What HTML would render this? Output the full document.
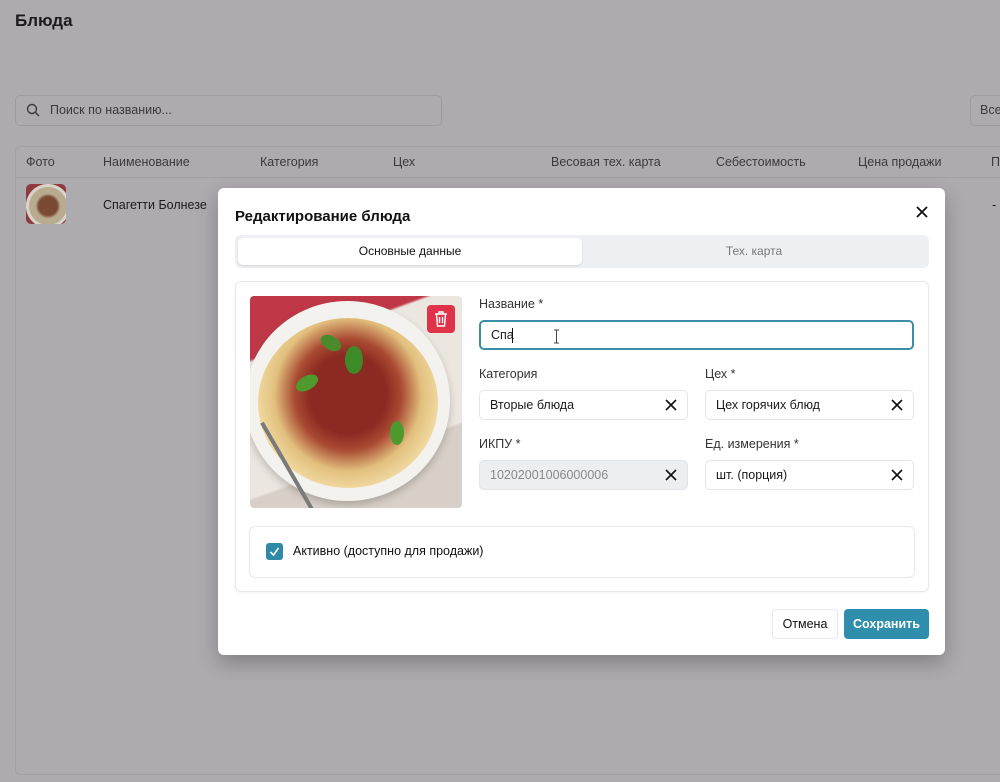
<!DOCTYPE html>
<html><head><meta charset="utf-8">
<style>
*{box-sizing:border-box;margin:0;padding:0}
body{width:1000px;height:782px;overflow:hidden;background:#adabae;font-family:"Liberation Sans",sans-serif;color:#111;position:relative;font-size:12.5px}
.a{position:absolute}
.dim{color:#3a3a3c}
.modal{left:218px;top:188px;width:727px;height:467px;background:#fff;border-radius:6px;box-shadow:0 8px 20px rgba(0,0,0,.25)}
.inp{position:absolute;height:30px;border:1px solid #e2e4e8;border-radius:5px;background:#fff;font-size:12.5px;line-height:28px;padding-left:10px;color:#1a1a1a}
.x{position:absolute;right:9px;top:7px;width:14px;height:14px}
.lbl{position:absolute;font-size:12.5px;color:#333}
</style></head><body>
<div class="a" style="left:15px;top:11px;font-size:17px;font-weight:bold;color:#1b1b1d">Блюда</div>
<div class="a" style="left:15px;top:95px;width:427px;height:31px;border:1px solid #9d9b9f;border-radius:5px"></div>
<svg class="a" style="left:26px;top:103px" width="14" height="14" viewBox="0 0 14 14"><circle cx="6" cy="6" r="4.5" fill="none" stroke="#3a3a3c" stroke-width="1.4"/><path d="M9.5 9.5L13 13" stroke="#3a3a3c" stroke-width="1.4"/></svg>
<div class="a dim" style="left:50px;top:103px">Поиск по названию...</div>
<div class="a" style="left:970px;top:95px;width:40px;height:31px;border:1px solid #9d9b9f;border-radius:5px"></div>
<div class="a dim" style="left:980px;top:103px">Все</div>
<div class="a" style="left:15px;top:146px;width:1000px;height:629px;border:1px solid #a2a0a4;border-radius:5px"></div>
<div class="a" style="left:16px;top:177px;width:984px;height:1px;background:#a2a0a4"></div>
<div class="a dim" style="left:26px;top:155px">Фото</div>
<div class="a dim" style="left:103px;top:155px">Наименование</div>
<div class="a dim" style="left:260px;top:155px">Категория</div>
<div class="a dim" style="left:393px;top:155px">Цех</div>
<div class="a dim" style="left:551px;top:155px">Весовая тех. карта</div>
<div class="a dim" style="left:716px;top:155px">Себестоимость</div>
<div class="a dim" style="left:858px;top:155px">Цена продажи</div>
<div class="a dim" style="left:991px;top:155px">П</div>
<div class="a" style="left:26px;top:184px;width:40px;height:40px;border-radius:5px;background:radial-gradient(circle at 55% 55%,#7a4a34 0 30%,#b8ab90 40% 60%,#d8d4cc 62% 70%,#8e3a40 72%)"></div>
<div class="a" style="left:103px;top:198px;color:#1b1b1d">Спагетти Болнезе</div>
<div class="a" style="left:992px;top:198px">-</div>

<div class="a modal">
<div class="a" style="left:17px;top:20px;font-size:15px;font-weight:bold;color:#111">Редактирование блюда</div>
<svg class="a" style="left:698px;top:18px" width="12" height="12" viewBox="0 0 12 12"><path d="M1 1L11 11M11 1L1 11" stroke="#111" stroke-width="1.8"/></svg>
<div class="a" style="left:17px;top:47px;width:694px;height:33px;background:#eef0f3;border-radius:6px"></div>
<div class="a" style="left:20px;top:50px;width:344px;height:27px;background:#fff;border-radius:5px;box-shadow:0 1px 2px rgba(0,0,0,.12);text-align:center;line-height:27px;font-size:12px;color:#111">Основные данные</div>
<div class="a" style="left:364px;top:50px;width:344px;height:27px;text-align:center;line-height:27px;font-size:12px;color:#777">Тех. карта</div>
<div class="a" style="left:17px;top:93px;width:694px;height:311px;border:1px solid #e6e8eb;border-radius:6px;box-shadow:0 1px 2px rgba(0,0,0,.05)"></div>
<div class="a" style="left:32px;top:108px;width:212px;height:212px;border-radius:4px;overflow:hidden;background:linear-gradient(160deg,#c03848 0 22%,#ece6e0 23% 70%,#d8d0c8 71%)">
  <div class="a" style="left:-5px;top:5px;width:205px;height:200px;border-radius:50%;background:#f4f2ee;box-shadow:0 4px 8px rgba(0,0,0,.2)"></div>
  <div class="a" style="left:8px;top:22px;width:180px;height:170px;border-radius:50%;background:radial-gradient(ellipse at 50% 45%,#8a2a22 0 30%,#a94a32 42%,#e2c07e 58%,#f0d9a0 72%)"></div>
  <div class="a" style="left:70px;top:40px;width:22px;height:14px;border-radius:50%;background:#4a8a2a;transform:rotate(30deg)"></div>
  <div class="a" style="left:45px;top:80px;width:24px;height:14px;border-radius:50%;background:#4e9a2e;transform:rotate(-30deg)"></div>
  <div class="a" style="left:140px;top:125px;width:14px;height:24px;border-radius:50%;background:#4e9a2e"></div>
  <div class="a" style="left:95px;top:50px;width:18px;height:28px;border-radius:50%;background:#3f8a28"></div>
  <div class="a" style="left:35px;top:120px;width:4px;height:100px;background:#7a7a7a;transform:rotate(-30deg)"></div>
  <div class="a" style="left:177px;top:9px;width:28px;height:28px;border-radius:4px;background:#e0334a"></div>
  <svg class="a" style="left:184px;top:15px" width="14" height="16" viewBox="0 0 14 16"><path d="M1 3H13M5 3V1H9V3M2.5 3L3.5 15H10.5L11.5 3M5.5 6V12M8.5 6V12" fill="none" stroke="#fff" stroke-width="1.4"/></svg>
</div>
<div class="lbl" style="left:261px;top:109px">Название *</div>
<div class="inp" style="left:261px;top:132px;width:435px;border:2px solid #3a8ea8;line-height:26px">Спа</div>
<div class="a" style="left:294px;top:140px;width:1px;height:15px;background:#111"></div>
<svg class="a" style="left:335px;top:141px" width="7" height="15" viewBox="0 0 7 15"><path d="M1 1H6M3.5 1V14M1 14H6" stroke="#444" stroke-width="1"/></svg>
<div class="lbl" style="left:261px;top:179px">Категория</div>
<div class="lbl" style="left:487px;top:179px">Цех *</div>
<div class="inp" style="left:261px;top:202px;width:209px">Вторые блюда<svg class="x" viewBox="0 0 14 14"><path d="M2 2L12 12M12 2L2 12" stroke="#111" stroke-width="1.6"/></svg></div>
<div class="inp" style="left:487px;top:202px;width:209px">Цех горячих блюд<svg class="x" viewBox="0 0 14 14"><path d="M2 2L12 12M12 2L2 12" stroke="#111" stroke-width="1.6"/></svg></div>
<div class="lbl" style="left:261px;top:249px">ИКПУ *</div>
<div class="lbl" style="left:487px;top:249px">Ед. измерения *</div>
<div class="inp" style="left:261px;top:272px;width:209px;background:#eceef1;color:#888">10202001006000006<svg class="x" viewBox="0 0 14 14"><path d="M2 2L12 12M12 2L2 12" stroke="#111" stroke-width="1.6"/></svg></div>
<div class="inp" style="left:487px;top:272px;width:209px">шт. (порция)<svg class="x" viewBox="0 0 14 14"><path d="M2 2L12 12M12 2L2 12" stroke="#111" stroke-width="1.6"/></svg></div>
<div class="a" style="left:31px;top:338px;width:666px;height:52px;border:1px solid #e6e8eb;border-radius:6px"></div>
<div class="a" style="left:48px;top:355px;width:17px;height:17px;border-radius:3px;background:#2e8aa8"></div>
<svg class="a" style="left:50px;top:357px" width="13" height="13" viewBox="0 0 13 13"><path d="M2.5 7L5.5 10L10.5 3" fill="none" stroke="#fff" stroke-width="1.6"/></svg>
<div class="a" style="left:75px;top:356px;color:#111">Активно (доступно для продажи)</div>
<div class="a" style="left:554px;top:421px;width:66px;height:30px;border:1px solid #e6e8eb;border-radius:4px;text-align:center;line-height:28px">Отмена</div>
<div class="a" style="left:626px;top:421px;width:85px;height:30px;background:#2e8eab;border-radius:4px;text-align:center;line-height:30px;color:#fff;font-weight:bold">Сохранить</div>
</div>
</body></html>
